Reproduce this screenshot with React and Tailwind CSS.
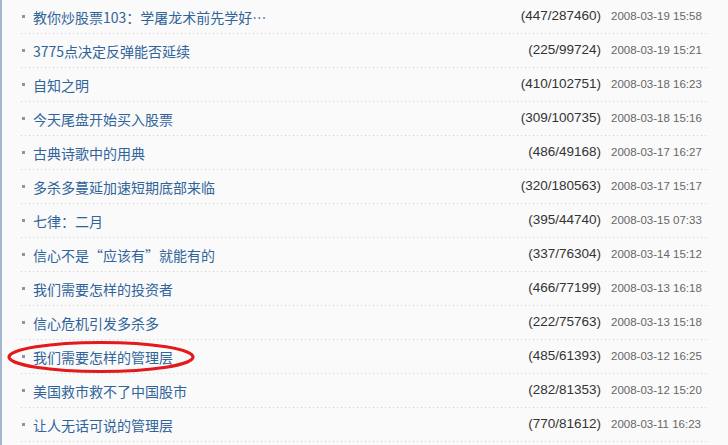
import React from 'react';

const rows = [
  { title: '教你炒股票103：学屠龙术前先学好…', count: '(447/287460)', date: '2008-03-19 15:58' },
  { title: '3775点决定反弹能否延续', count: '(225/99724)', date: '2008-03-19 15:21' },
  { title: '自知之明', count: '(410/102751)', date: '2008-03-18 16:23' },
  { title: '今天尾盘开始买入股票', count: '(309/100735)', date: '2008-03-18 15:16' },
  { title: '古典诗歌中的用典', count: '(486/49168)', date: '2008-03-17 16:27' },
  { title: '多杀多蔓延加速短期底部来临', count: '(320/180563)', date: '2008-03-17 15:17' },
  { title: '七律：二月', count: '(395/44740)', date: '2008-03-15 07:33' },
  { title: '信心不是“应该有”就能有的', count: '(337/76304)', date: '2008-03-14 15:12' },
  { title: '我们需要怎样的投资者', count: '(466/77199)', date: '2008-03-13 16:18' },
  { title: '信心危机引发多杀多', count: '(222/75763)', date: '2008-03-13 15:18' },
  { title: '我们需要怎样的管理层', count: '(485/61393)', date: '2008-03-12 16:25', marked: true },
  { title: '美国救市救不了中国股市', count: '(282/81353)', date: '2008-03-12 15:20' },
  { title: '让人无话可说的管理层', count: '(770/81612)', date: '2008-03-11 16:23' },
];

const Row = ({ title, count, date, marked }) => (
  <li className="relative flex flex-col h-[34px]">
    <div className="flex items-center flex-1 pl-[1px]">
      <span className="w-[3px] h-[3px] bg-[#8d94a8] mr-[8px] -mt-[1px]" />
      <a className="flex-1 min-w-0 text-[14px] text-[#30649a] font-['Noto_Sans_CJK_SC',sans-serif] leading-[20px] whitespace-nowrap">
        {title}
      </a>
      <span className="text-[13.5px] text-[#333] font-['Liberation_Sans',Arial,sans-serif] mr-[10px]">{count}</span>
      <span className="w-[95px] text-[11.5px] text-[#666] font-['Liberation_Sans',Arial,sans-serif]">{date}</span>
    </div>
    <div className="h-px bg-[linear-gradient(to_right,#d0d0d0_1px,transparent_1px)] bg-[length:4px_1px]" />
    {marked && (
      <svg className="absolute -left-[15px] top-0 pointer-events-none" width="194" height="34" viewBox="0 0 194 34">
        <ellipse cx="95" cy="17" rx="92" ry="14.5" fill="none" stroke="#e3191b" strokeWidth="3.2" />
      </svg>
    )}
  </li>
);

export default function App() {
  return (
    <div className="w-[728px] h-[445px] overflow-hidden bg-[#fafafa] border-l-2 border-[#a3b6cd]">
      <ul className="pl-[19px] pr-[22px]">
        {rows.map((r) => (
          <Row key={r.date} {...r} />
        ))}
      </ul>
    </div>
  );
}
